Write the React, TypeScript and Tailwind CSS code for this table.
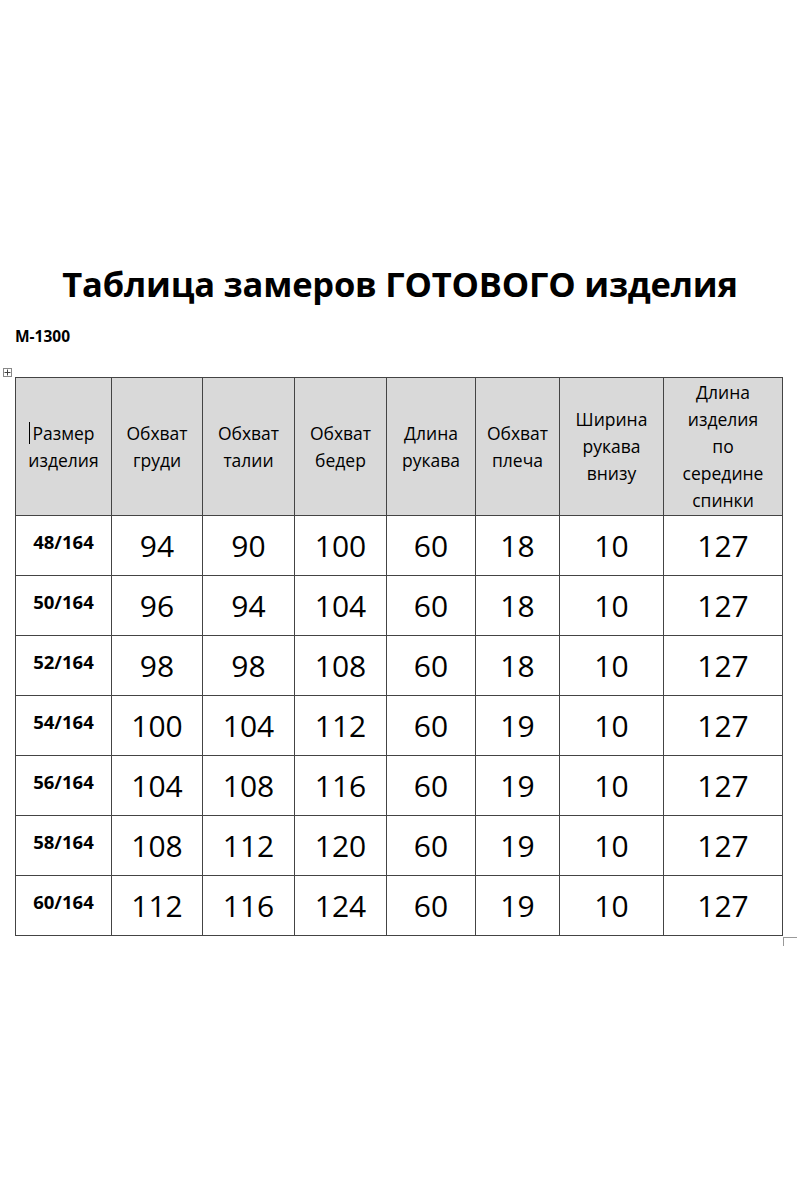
import React from "react";

const headers = [
  ["Размер", "изделия"],
  ["Обхват", "груди"],
  ["Обхват", "талии"],
  ["Обхват", "бедер"],
  ["Длина", "рукава"],
  ["Обхват", "плеча"],
  ["Ширина", "рукава", "внизу"],
  ["Длина", "изделия", "по", "середине", "спинки"],
];

const widths = [96, 91, 92, 92, 89, 84, 104, 119];

const rows: string[][] = [
  ["48/164", "94", "90", "100", "60", "18", "10", "127"],
  ["50/164", "96", "94", "104", "60", "18", "10", "127"],
  ["52/164", "98", "98", "108", "60", "18", "10", "127"],
  ["54/164", "100", "104", "112", "60", "19", "10", "127"],
  ["56/164", "104", "108", "116", "60", "19", "10", "127"],
  ["58/164", "108", "112", "120", "60", "19", "10", "127"],
  ["60/164", "112", "116", "124", "60", "19", "10", "127"],
];

function MoveIcon() {
  return (
    <svg width="9" height="9" viewBox="0 0 9 9" className="block">
      <rect x="0.5" y="0.5" width="8" height="8" fill="white" stroke="#888" />
      <path d="M4.5 1.5v6M1.5 4.5h6" stroke="#444" strokeWidth="1" />
    </svg>
  );
}

export default function App() {
  return (
    <div
      className="w-[800px] h-[1200px] bg-white text-black"
      style={{ fontFamily: '"Open Sans", "Noto Sans", sans-serif' }}
    >
      <div className="pt-[258px] text-center">
        <h1 className="text-[34.5px] leading-[52px] font-bold tracking-[-0.2px]">
          Таблица замеров ГОТОВОГО изделия
        </h1>
      </div>
      <div className="pl-[15px] mt-[16px] text-[15.5px] font-bold leading-[20px]">М-1300</div>
      <div className="pl-[3px] mt-[22px] h-[9px]">
        <MoveIcon />
      </div>
      <div className="pl-[15px]">
        <table className="border-collapse table-fixed">
          <colgroup>
            {widths.map((w, i) => (
              <col key={i} style={{ width: w }} />
            ))}
          </colgroup>
          <thead>
            <tr className="h-[138px]">
              {headers.map((h, i) => (
                <th
                  key={i}
                  className="border border-[#444] bg-[#d9d9d9] font-normal text-[17.5px] leading-[27px] text-center align-middle p-0"
                >
                  {h.map((l, j) => (
                    <div key={j} className="relative">
                      {i === 0 && j === 0 && (
                        <span className="absolute left-[13px] top-[2px] w-px h-[22px] bg-black" />
                      )}
                      {l}
                    </div>
                  ))}
                </th>
              ))}
            </tr>
          </thead>
          <tbody>
            {rows.map((r, i) => (
              <tr key={i} className="h-[60px]">
                {r.map((c, j) =>
                  j === 0 ? (
                    <td
                      key={j}
                      className="border border-[#444] text-center align-middle font-bold text-[18.5px] p-0 pb-[8px]"
                    >
                      {c}
                    </td>
                  ) : (
                    <td
                      key={j}
                      className="border border-[#444] text-center align-middle text-[30px] p-0"
                    >
                      {c}
                    </td>
                  )
                )}
              </tr>
            ))}
          </tbody>
        </table>
      </div>
      <div className="pl-[783px] mt-[1px]">
        <div className="w-[14px] h-[9px] border-l border-t border-[#999]" />
      </div>
    </div>
  );
}
